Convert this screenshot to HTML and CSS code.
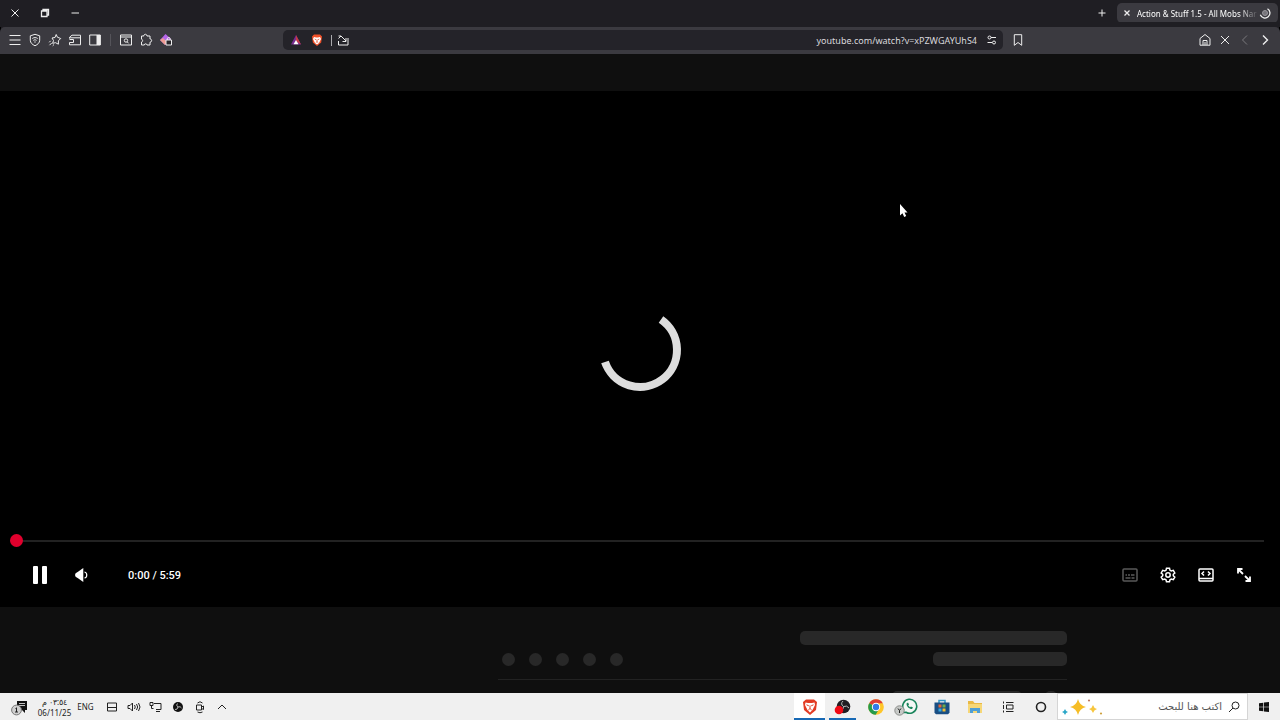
FILE: index.html
```html
<!DOCTYPE html>
<html lang="en">

<head>
    <meta charset="utf-8">
    <title>Action &amp; Stuff 1.5</title>
    <link rel="stylesheet" href="styles.css">
</head>

<body>
    <!-- Window title bar -->
    <header class="titlebar">
        <div class="window-buttons">
            <button aria-label="Close"><svg width="10" height="10" viewBox="0 0 10 10"><path d="M1.500 1.500l7 7m0-7l-7 7"/></svg></button>
            <button aria-label="Restore"><svg width="10" height="10" viewBox="0 0 10 10"><path d="M1.500 3h5.500v5.500h-5.500zM3 3V1.500h5.500V7H7" stroke-width="1.300"/></svg></button>
            <button aria-label="Minimize"><svg width="10" height="10" viewBox="0 0 10 10"><path d="M1.500 5h7.500"/></svg></button>
        </div>
        <div class="tabs">
            <button class="new-tab" aria-label="New tab"><svg width="10" height="10" viewBox="0 0 10 10"><path d="M5 1.500v7M1.500 5h7"/></svg></button>
            <div class="tab">
                <button class="tab-close" aria-label="Close tab"><svg width="8" height="8" viewBox="0 0 8 8"><path d="M1.500 1.500l5 5m0-5l-5 5" stroke-width="1.300"/></svg></button>
                <span class="tab-title">Action &amp; Stuff 1.5 - All Mobs Nar</span>
                <svg width="12" height="12" viewBox="0 0 12 12"><circle cx="6" cy="6" r="2.500" fill="#77757b" stroke="#99979d"/><path d="M8.500 1.700A5 5 0 1 1 1.300 7.800" stroke-width="1.300"/></svg>
            </div>
        </div>
    </header>

    <!-- Browser toolbar -->
    <nav class="toolbar">
        <div class="tools">
            <button aria-label="Menu"><svg width="14" height="14" viewBox="0 0 14 14"><path d="M1.500 2.500h11M1.500 7h11M1.500 11.500h11"/></svg></button>
            <button aria-label="VPN"><svg width="14" height="14" viewBox="0 0 14 14"><path d="M7 1.300l4.700 1.500v4.500c0 2.500-2 4.200-4.700 5.500-2.700-1.300-4.700-3-4.700-5.500V2.800z"/><path d="M4.300 5.500c1.700-1.200 3.700-1.200 5.400 0M5.400 7.400c1-.8 2.200-.8 3.200 0M6.300 9h1.400"/></svg></button>
            <button aria-label="Leo"><svg width="14" height="14" viewBox="0 0 14 14"><path d="M8.200 1.500l1.200 2.700 3.300 1.300-2.300 2.300v3.400L7.600 9.700l-3 .6.900-2.800L4 5l3-.5zM3.700 10L1.500 12.200M2.700 7.800L1.200 9.300M6 11.500l-1.300 1.300"/></svg></button>
            <button aria-label="Wallet"><svg width="14" height="14" viewBox="0 0 14 14"><path d="M1.500 5.500V4.300L4 2.200h8.500v9.600h-11V9.500M1.500 4.800h11M1.500 6.500h4v3h-4"/></svg></button>
            <button aria-label="Sidebar"><svg width="14" height="14" viewBox="0 0 14 14"><path d="M1.700 2h10.600v10H1.700z"/><path class="solid" d="M8.500 2h4v10h-4z"/></svg></button>
            <span class="tool-divider"></span>
            <button aria-label="Page search"><svg width="14" height="14" viewBox="0 0 14 14"><path d="M1.500 2h11v10h-11zM1.500 4h11"/><circle cx="7" cy="7.500" r="1.700"/><path d="M8.200 8.800l1.300 1.500"/></svg></button>
            <button aria-label="Extensions"><svg width="14" height="14" viewBox="0 0 14 14"><path d="M2.500 3h2.300c-.2-2.300 3.300-2.300 3.200 0h3v3c2.200-.2 2.200 3.200 0 3.200V12H8c0-1.600-2.600-1.600-2.700 0H2.500V9c1.500-.2 1.500-2.600 0-2.800z"/></svg></button>
            <button aria-label="Profile extension"><svg width="14" height="14" viewBox="0 0 14 14"><path d="M6.500 1L1 7l5 5 6-6z" fill="#b565e8" stroke="none"/><path d="M1 7l5 5 2-3-4-4z" fill="#ec9c91" stroke="none"/><path d="M7 7h5.500v5H7z" fill="#29272c"/><path d="M8.300 7V5.800c0-1.800 2.900-1.800 2.900 0V7"/></svg></button>
        </div>
        <div class="address-bar">
            <svg width="14" height="14" viewBox="0 0 14 14"><path d="M7 2l5 9.500H2z" fill="#782c91" stroke="none"/><path d="M7 2l5 9.500L7 8z" fill="#c63b43" stroke="none"/><path d="M7 7l2.500 4.300h-5z" fill="#fff" stroke="none"/></svg>
            <svg width="14" height="14" viewBox="0 0 14 14"><path d="M4 1.500h6l2 2-.8 6L7 13l-4.200-3.500-.8-6z" fill="#f05028" stroke="none"/><path d="M4 4l2 .5h2L10 4l1 2-2 4-2 1.500L5 10 3 6z" fill="#fff" stroke="none"/><path d="M4.700 6l1.500.8M9.300 6l-1.500.8M7 6.500v2.200M5.800 9.500L7 8.700l1.200.8" stroke="#e05032" stroke-width=".8"/></svg>
            <span class="address-divider"></span>
            <svg class="share" width="14" height="14" viewBox="0 0 14 14"><path d="M5 3H2.500M2.500 5.500L5 3l5 5M6.500 8.500h3.500V5M2.500 8v4h9.500V5"/></svg>
            <input class="url" type="text" aria-label="Address" value="youtube.com/watch?v=xPZWGAYUhS4">
            <svg width="12" height="12" viewBox="0 0 12 12"><circle cx="3.500" cy="3.500" r="1.500"/><path d="M5 3.500h5M1.500 8.500H6"/><circle cx="8" cy="8.500" r="1.500"/></svg>
        </div>
        <div class="page-actions">
            <button aria-label="Bookmark"><svg width="12" height="14" viewBox="0 0 12 14"><path d="M2.300 1.700h7.400v10.600L6 9.500l-3.700 2.800z"/></svg></button>
            <span class="spacer"></span>
            <button aria-label="Home"><svg width="14" height="14" viewBox="0 0 14 14"><path d="M2 5.500L7 1.500l5 4v6.700H2zM5 12V7.500h4V12M7 9v3"/></svg></button>
            <button aria-label="Stop"><svg width="12" height="12" viewBox="0 0 12 12"><path d="M2 2l8 8m0-8l-8 8"/></svg></button>
            <button class="dim" aria-label="Forward"><svg width="12" height="12" viewBox="0 0 12 12"><path d="M8 1.500L3.500 6 8 10.500"/></svg></button>
            <button aria-label="Back"><svg width="12" height="12" viewBox="0 0 12 12"><path d="M4 1.500L8.500 6 4 10.500" stroke-width="1.400"/></svg></button>
        </div>
    </nav>

    <main class="page">
        <div class="masthead"></div>

        <section class="player">
            <svg class="spinner" width="88" height="88" viewBox="0 0 88 88"><path d="M65 14.500A37 37 0 1 1 9 57"/></svg>
            <svg class="pointer" width="9" height="14" viewBox="0 0 9 14"><path d="M1 0v11.500l2.500-2.300L5.200 13l2-1-1.700-3.500h3z"/></svg>
            <div class="controls">
                <input class="progress" type="range" min="0" max="359" value="0" aria-label="Seek">
                <div class="control-row">
                    <button class="pause" aria-label="Pause"><svg width="16" height="20" viewBox="0 0 16 20"><rect class="solid" x="1" y="1" width="5" height="18" rx="1"/><rect class="solid" x="10" y="1" width="5" height="18" rx="1"/></svg></button>
                    <button class="volume" aria-label="Volume"><svg width="16" height="16" viewBox="0 0 16 16"><path class="solid" d="M9.300 1v14L4 11.300 2 10c-1.200-.8-1.200-3.200 0-4l2-1.300z"/><path d="M10.500 5c3 .5 3 5.500 0 6" stroke-width="1.200"/></svg></button>
                    <span class="time">0:00 / 5:59</span>
                    <span class="spacer"></span>
                    <button class="dim" aria-label="Subtitles"><svg width="16" height="14" viewBox="0 0 16 14"><rect x="1" y="1" width="14" height="12" rx="1"/><path d="M3.500 7h1.500m1 0h2m1 0h3.500M3.500 10h5m1 0h3"/></svg></button>
                    <button aria-label="Settings"><svg width="16" height="16" viewBox="0 0 16 16"><path d="M6.500 1.300h3l.5 2 1.300.7 2-.6 1.500 2.600L13.300 7.300v1.400l1.500 1.400-1.500 2.600-2-.6-1.300.7-.5 2h-3l-.5-2-1.300-.7-2 .6-1.500-2.600 1.500-1.400V7.300L1.200 6l1.500-2.600 2 .6L6 3.300z"/><circle cx="8" cy="8" r="2.200"/></svg></button>
                    <button aria-label="Theater mode"><svg width="16" height="14" viewBox="0 0 16 14"><rect x="1" y="1" width="14" height="12" rx="1"/><path d="M1 10.500h14M6 3.500L4 5.500l2 2M10 3.500l2 2-2 2"/></svg></button>
                    <button aria-label="Full screen"><svg width="16" height="16" viewBox="0 0 16 16"><path d="M2 6.500V2h4.500M2 2l5 5M14 9.500V14H9.500M14 14L9 9" stroke-width="1.800"/></svg></button>
                </div>
            </div>
        </section>

        <!-- Loading placeholders -->
        <section class="skeleton">
            <div class="skeleton-bar title-bar"></div>
            <div class="skeleton-row">
                <div class="skeleton-dots"><i></i><i></i><i></i><i></i><i></i></div>
                <div class="skeleton-bar short-bar"></div>
            </div>
            <div class="skeleton-next">
                <div class="skeleton-bar name-bar"></div>
                <div class="skeleton-bar avatar-bar"></div>
            </div>
        </section>
    </main>

    <!-- Windows taskbar -->
    <footer class="taskbar">
        <button class="notices" aria-label="Notifications"><svg width="18" height="18" viewBox="0 0 18 18"><path d="M6 3h10v9h-2v3l-3-3H6z" fill="#111" stroke="none"/><path d="M8 5.500h6M8 7.500h6" stroke="#eee" stroke-width=".8"/><circle cx="5.500" cy="12" r="4.900" fill="#cfcfcf" stroke="#777"/><path d="M4.500 10.500l1-.7V14M4 14h3" stroke="#222"/></svg></button>
        <div class="clock"><span dir="rtl">٠٣:٥٤ م</span><span>06/11/25</span></div>
        <button class="language">ENG</button>
        <div class="tray">
            <button aria-label="Touch keyboard"><svg width="12" height="12" viewBox="0 0 12 12"><path d="M1.500 2h9v8h-9zM1.500 6.500h9"/></svg></button>
            <button aria-label="Sound"><svg width="14" height="12" viewBox="0 0 14 12"><path d="M1 4.500h2L5.500 2v8L3 7.500H1zM7.500 4q1.500 2 0 4M9.500 3q2.300 3 0 6M11.500 2q3 4 0 8"/></svg></button>
            <button aria-label="Network"><svg width="14" height="12" viewBox="0 0 14 12"><path d="M5 2.500h7v6H7M1 1.500h3v3H1zM2.500 4.500v3h2M7 10.500h4"/></svg></button>
            <button aria-label="Recorder"><svg width="12" height="12" viewBox="0 0 12 12"><circle cx="6" cy="6" r="5" fill="#111" stroke="none"/><path d="M5.500 2.500Q3.500 4 6 6q2.500-1 3.500 1M6 6Q5.500 9 3 8.500" stroke="#ddd" stroke-width=".8"/></svg></button>
            <button aria-label="Meet now"><svg width="12" height="14" viewBox="0 0 12 14"><path d="M2.500 5h5v5h-5zM7.500 7l2-1v3.500l-2-1M3.500 3Q6 .5 8.500 3M3.500 12Q6 13.500 8.500 12"/></svg></button>
            <button aria-label="Show hidden icons"><svg width="12" height="12" viewBox="0 0 12 12"><path d="M2 8l4-4 4 4"/></svg></button>
        </div>
        <span class="spacer"></span>
        <div class="apps">
            <button class="open active" aria-label="Brave"><svg width="16" height="18" viewBox="0 0 16 18"><path d="M4 1.500h8L15 4l-1 8-6 5-6-5L1 4z" fill="#e23b24" stroke="none"/><path d="M3.500 4.500L6 5h4l2.500-.5L13 7l-2.500 5L8 14.500 5.500 12 3 7z" fill="#fff" stroke="none"/><path d="M4.500 6.800l2.300 1M11.500 6.800l-2.300 1M8 7.500v3M6.300 12L8 10.500l1.700 1.500" stroke="#df3e27"/></svg></button>
            <button class="open" aria-label="OBS Studio"><svg width="18" height="18" viewBox="0 0 18 18"><circle cx="9.500" cy="8.500" r="6.800" fill="#201e22" stroke="none"/><path d="M9 3Q6 6 9.500 8.500 13 7 15 10M9.500 8.500Q9 13 6 12" stroke="#bbb"/><circle cx="5" cy="12" r="4.300" fill="#f00914" stroke="none"/></svg></button>
            <button aria-label="Chrome"><svg width="18" height="18" viewBox="0 0 18 18"><g stroke="none"><circle cx="9" cy="9" r="7.800" fill="#ffc629"/><path d="M9 9L2.200 5.200A7.800 7.800 0 0 1 15.800 5.200H9z" fill="#df3e36"/><path d="M2.200 5.200A7.800 7.800 0 0 0 8.700 16.800L12 11 9 9z" fill="#249b4b"/><circle cx="9" cy="9" r="4.200" fill="#fff"/><circle cx="9" cy="9" r="3.200" fill="#327be8"/></g></svg></button>
            <button aria-label="WhatsApp"><svg width="30" height="18" viewBox="0 0 30 18"><path d="M8.500 14.500l1-3A7 7 0 1 1 12 14.200z" fill="#f4f8f5" stroke="#19845b" stroke-width="1.600"/><path d="M12.500 5.500c0 3 2.500 5.500 5.500 5.500l1-1.500-2-1-1 .8-1.800-1.800.8-1-1-2z" fill="#19845b" stroke="none"/><circle cx="5.500" cy="12.500" r="4.700" fill="#c7c9c7" stroke="#8c8e8c"/><path d="M4 10.500l1.500 2L7 10.500M5.500 12.500V15" stroke="#222"/></svg></button>
            <button aria-label="Microsoft Store"><svg width="18" height="18" viewBox="0 0 18 18"><path d="M6 5V2.500h6V5" stroke="#3297c8" stroke-width="1.500"/><path d="M1.500 4.500h15v10.200l-1.500 1.500H3l-1.500-1.500z" fill="#194e83" stroke="none"/><g stroke="none"><path d="M5.500 6.500h3v3h-3z" fill="#e46738"/><path d="M9.500 6.500h3v3h-3z" fill="#70ad48"/><path d="M5.500 10.500h3v3h-3z" fill="#36a7e0"/><path d="M9.500 10.500h3v3h-3z" fill="#eebc33"/></g></svg></button>
            <button aria-label="File Explorer"><svg width="18" height="16" viewBox="0 0 18 16"><g stroke="none"><path d="M2 2h5l1.500 2H16v10H2z" fill="#e9b945"/><path d="M2 5h14v9H2z" fill="#f6d777"/><path d="M4 9h10v5h-3v-2H7v2H4z" fill="#4f9ed4"/></g></svg></button>
            <button aria-label="Task view"><svg width="14" height="14" viewBox="0 0 14 14"><path d="M2.500 1.500v2M2.500 5v4M2.500 10.500v2M5 2.500h7.500M5.500 5h6.500v4H5.500zM5 11.500h7.500"/></svg></button>
            <button aria-label="Cortana"><svg width="14" height="14" viewBox="0 0 14 14"><circle cx="7" cy="7" r="4.500" stroke-width="1.600"/></svg></button>
        </div>
        <div class="search-box" dir="rtl">
            <svg width="14" height="14" viewBox="0 0 14 14"><circle cx="8.500" cy="5.500" r="3.500"/><path d="M6 8l-4 4"/></svg>
            <input type="text" aria-label="بحث" placeholder="اكتب هنا للبحث">
            <svg width="42" height="18" viewBox="0 0 42 18"><g stroke="none"><path d="M17 1q1.500 6.500 8 8-6.500 1.500-8 8-1.500-6.500-8-8 6.500-1.500 8-8z" fill="#f6bd26"/><path d="M32 7q.8 3.200 4 4-3.200.8-4 4-.8-3.200-4-4 3.200-.8 4-4z" fill="#f7c63e"/><path d="M4 11q.7 2.300 3 3-2.300.7-3 3-.7-2.300-3-3 2.300-.7 3-3z" fill="#2ba7c8"/><circle cx="28" cy="2.500" r="1.100" fill="#bd7661"/><circle cx="40" cy="15.500" r="1.100" fill="#cfa13e"/></g></svg>
        </div>
        <button class="start" aria-label="Start"><svg width="12" height="12" viewBox="0 0 12 12"><path class="solid" d="M1 2.300l4.300-.6v4H1zM6 1.500L11 1v4.700H6zM1 6.300h4.300v4L1 9.700zM6 6.300h5V11l-5-.6z"/></svg></button>
    </footer>
</body>

</html>
```
FILE: styles.css
```css
* {
    box-sizing: border-box;
}

body {
    margin: 0;
    height: 100vh;
    display: flex;
    flex-direction: column;
    overflow: hidden;
    background-color: #000000;
    color: #eeeeee;
    font-family: "Noto Sans", "Open Sans", sans-serif;
    font-size: 9px;
}

button {
    display: flex;
    align-items: center;
    justify-content: center;
    padding: 0;
    border: 0;
    background: none;
    color: inherit;
    font: inherit;
}

input {
    min-width: 0;
    margin: 0;
    padding: 0;
    border: 0;
    outline: 0;
    background: none;
    color: inherit;
    font: inherit;
}

svg {
    display: block;
    flex: none;
    fill: none;
    stroke: currentColor;
}

.solid {
    fill: currentColor;
    stroke: none;
}

.spacer {
    flex: 1;
}

/* Title bar */

.titlebar {
    display: flex;
    justify-content: space-between;
    height: 27px;
    padding-bottom: 1px;
    background-color: #1f1e23;
}

.window-buttons {
    display: flex;
}

.window-buttons button {
    width: 30px;
}

.tabs {
    display: flex;
    align-items: center;
    padding-right: 2px;
}

.new-tab {
    width: 30px;
}

.tab {
    display: flex;
    align-items: center;
    justify-content: space-between;
    width: 161px;
    height: 20px;
    padding: 0 7px 0 6px;
    border-radius: 5px;
    background-color: #3b3a40;
}

.tab-title {
    flex: 1;
    margin-left: 6px;
    white-space: nowrap;
    color: #ffffff;
    font-size: 8px;
    -webkit-mask-image: linear-gradient(to right, #000 84%, transparent);
    mask-image: linear-gradient(to right, #000 84%, transparent);
}

/* Toolbar */

.toolbar {
    display: grid;
    grid-template-columns: 283px 1fr 277px;
    align-items: center;
    height: 27px;
    padding-bottom: 1px;
    border-radius: 5px 5px 0 0;
    background-color: #3b3a40;
    box-shadow: 0 -6px 0 -1px #1f1e23;
}

.tools,
.page-actions {
    display: flex;
    align-items: center;
    padding: 0 5px;
}

.tools button,
.page-actions button {
    width: 20px;
    height: 20px;
}

.tool-divider {
    width: 1px;
    height: 12px;
    margin: 0 5px;
    background-color: #55545a;
}

.address-bar {
    display: flex;
    align-items: center;
    gap: 7px;
    height: 20px;
    padding: 0 5px 0 6px;
    border-radius: 5px;
    background-color: #242329;
}

.address-divider {
    width: 1px;
    height: 11px;
    background-color: #aaa9ad;
}

.share {
    margin-left: -3px;
}

.url {
    flex: 1;
    padding-right: 2px;
    text-align: right;
    color: #d9d8dc;
}

.dim {
    opacity: 0.35;
}

/* Page and video player */

.page {
    flex: 1;
    display: flex;
    flex-direction: column;
    min-height: 0;
    background-color: #0f0f0f;
}

.masthead {
    height: 37px;
}

.player {
    position: relative;
    flex: 1;
    display: flex;
    flex-direction: column;
    justify-content: flex-end;
    background-color: #000000;
}

.spinner {
    position: absolute;
    inset: 0;
    margin: auto;
    color: #dddddd;
    stroke-width: 8;
}

.pointer {
    position: absolute;
    left: 899px;
    top: 113px;
    fill: #ffffff;
    stroke: none;
}

.controls {
    padding: 0 16px 16px;
}

.progress {
    display: block;
    width: calc(100% + 6px);
    height: 14px;
    margin-left: -6px;
    appearance: none;
}

.progress::-webkit-slider-runnable-track {
    height: 2px;
    background-color: #222222;
}

.progress::-webkit-slider-thumb {
    appearance: none;
    width: 13px;
    height: 13px;
    margin-top: -6px;
    border-radius: 50%;
    background-color: #e1002d;
}

.control-row {
    display: flex;
    align-items: center;
    height: 32px;
    margin-top: 11px;
    padding-right: 1px;
    color: #ffffff;
}

.control-row button {
    width: 38px;
    height: 32px;
}

.control-row svg {
    stroke-width: 1.5;
}

.control-row .pause {
    width: 48px;
}

.control-row .volume {
    width: 36px;
}

.time {
    margin-left: 28px;
    font-family: Roboto, sans-serif;
    font-size: 11px;
    font-weight: 500;
}

/* Loading placeholders */

.skeleton {
    display: flex;
    flex-direction: column;
    gap: 7px;
    width: 569px;
    height: 86px;
    margin: 0 213px 0 auto;
    padding-top: 24px;
    overflow: hidden;
}

.skeleton-bar {
    height: 14px;
    border-radius: 5px;
    background-color: #282828;
}

.title-bar {
    flex: none;
    width: 267px;
    align-self: flex-end;
}

.skeleton-row {
    display: flex;
    align-items: flex-end;
    justify-content: space-between;
    padding-bottom: 13px;
    border-bottom: 1px solid #222222;
}

.skeleton-dots {
    display: flex;
    gap: 14px;
    padding-left: 4px;
}

.skeleton-dots i {
    width: 13px;
    height: 13px;
    border-radius: 50%;
    background-color: #282828;
}

.short-bar {
    width: 134px;
}

.skeleton-next {
    display: flex;
    justify-content: flex-end;
    gap: 23px;
    margin-top: 4px;
    padding-right: 10px;
}

.name-bar {
    width: 130px;
}

.avatar-bar {
    width: 12px;
}

/* Taskbar */

.taskbar {
    display: flex;
    height: 27px;
    background-color: #f0f0f0;
    color: #222222;
}

.notices {
    width: 39px;
}

.clock {
    display: flex;
    flex-direction: column;
    align-items: center;
    justify-content: center;
    width: 31px;
    font-size: 8px;
    line-height: 11px;
    white-space: nowrap;
}

.language {
    width: 31px;
    font-size: 8px;
}

.tray {
    display: flex;
}

.tray button {
    width: 22px;
}

.apps {
    display: flex;
}

.apps button {
    width: 33px;
}

.apps .open {
    width: 27px;
    margin: 0 3px;
    border-top: 2px solid transparent;
    border-bottom: 2px solid #1769b5;
}

.apps .active {
    width: 31px;
    margin: 0 1px;
    background-color: #ffffff;
}

.search-box {
    display: flex;
    align-items: center;
    gap: 5px;
    width: 191px;
    padding: 0 6px 0 3px;
    border: 1px solid #d5d5d5;
    background-color: #ffffff;
}

.search-box input {
    flex: 1;
    width: 0;
    font-family: "DejaVu Sans", sans-serif;
    font-size: 10px;
}

.search-box input::placeholder {
    color: #555555;
    opacity: 1;
}

.start {
    width: 32px;
    color: #111111;
}
```
